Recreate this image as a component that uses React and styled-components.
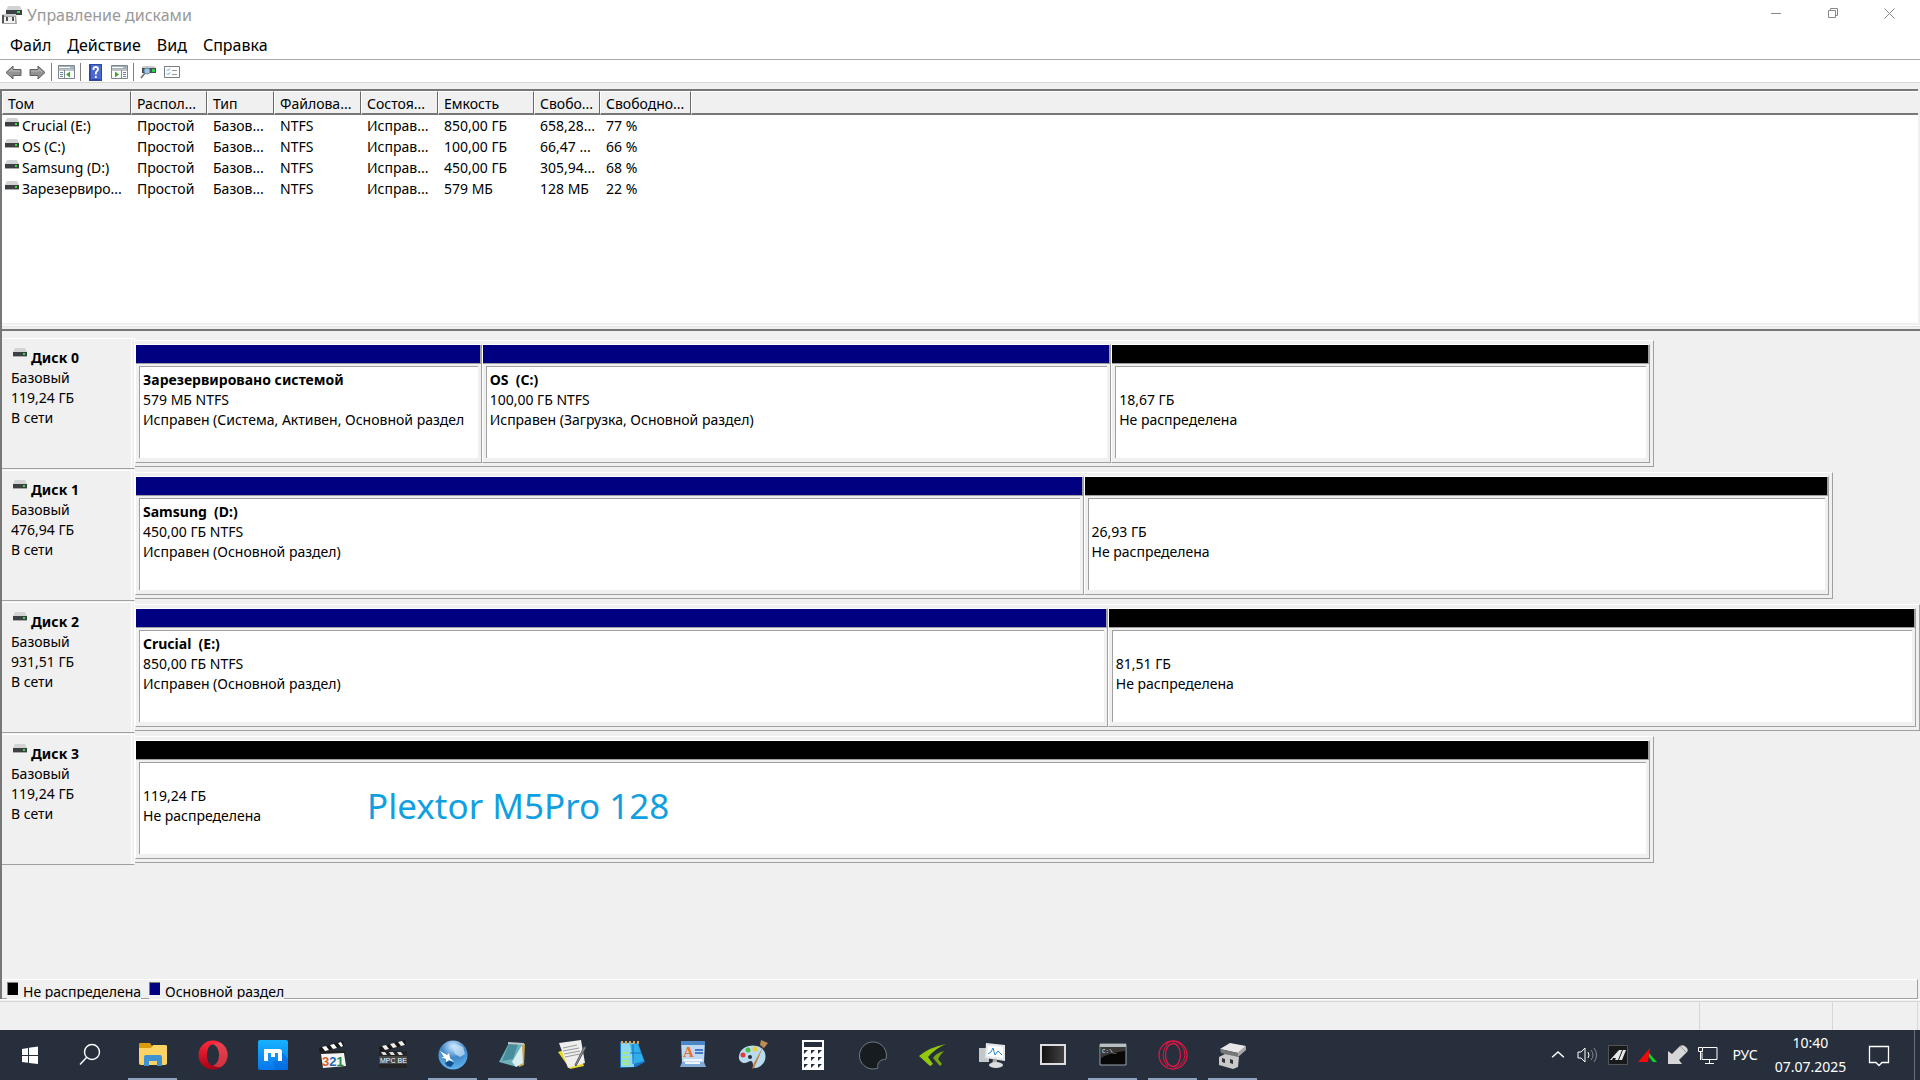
import React from "react";
import styled, { createGlobalStyle } from "styled-components";

const GlobalStyle = createGlobalStyle`
  *, *::before, *::after { box-sizing: border-box; }
  body { margin: 0; background: #f0f0f0; }
  button { font: inherit; color: inherit; background: none; border: 0; padding: 0; }
`;

const Screen = styled.div`
  display: flex;
  flex-direction: column;
  min-height: 100vh;
  background: #f0f0f0;
  color: #000;
  font: 14px/20px "Noto Sans", "Open Sans", sans-serif;
`;

const TitleBar = styled.header`
  display: flex;
  align-items: center;
  justify-content: space-between;
  height: 30px;
  padding: 0 2px;
  background: #fff;
  color: #999;
`;

const Title = styled.h1`
  display: flex;
  align-items: center;
  gap: 5px;
  margin: 0;
  font-size: 16px;
  font-weight: 400;
`;

const WindowButtons = styled.div`
  display: flex;
`;

const WindowButton = styled.button`
  display: grid;
  place-items: center;
  width: 57px;
  height: 30px;
  padding-bottom: 4px;
`;

const MenuBar = styled.nav`
  display: flex;
  gap: 16px;
  height: 30px;
  padding-left: 10px;
  align-items: center;
  background: #fff;
  border-bottom: 1px solid #a9a9a9;
  font-size: 16px;
`;

const ToolBar = styled.div`
  display: flex;
  align-items: center;
  height: 23px;
  padding: 2px 1px 0;
  background: #fff;
  border-bottom: 1px solid #d9d9d9;
`;

const ToolButton = styled.button`
  display: grid;
  place-items: center;
  width: 24px;
  height: 20px;
`;

const ToolSeparator = styled.span`
  width: 1px;
  height: 18px;
  margin: 0 2px;
  background: #808080;
`;

const Workspace = styled.main`
  display: flex;
  flex-direction: column;
  flex: 1;
  margin-top: 6px;
  border-left: 2px solid #777;
`;

const ListPane = styled.section`
  min-height: 234px;
  margin-right: 2px;
  background: #fff;
  border-top: 2px solid #777;
`;

const VolumeTable = styled.table`
  width: 100%;
  table-layout: fixed;
  border-collapse: separate;
  border-spacing: 0;
`;

const Column = styled.col`
  width: ${(p) => (p.$width ? `${p.$width}px` : "auto")};
`;

const HeadCell = styled.th`
  height: 24px;
  padding: 2px 0 0 5px;
  line-height: 19px;
  text-align: left;
  font-weight: 400;
  white-space: nowrap;
  overflow: hidden;
  background: #f0f0f0;
  border-top: 1px solid #fff;
  border-left: 1px solid #fff;
  border-right: ${(p) => (p.$last ? 0 : "1px solid #696969")};
  border-bottom: 2px solid #777;
`;

const Cell = styled.td`
  height: 21px;
  padding: 1px 0 0 6px;
  white-space: nowrap;
  overflow: hidden;
`;

const NameCell = styled.div`
  display: flex;
  gap: 3px;
  margin-left: -3px;
  svg { margin-top: 2px; }
`;

const Splitter = styled.div`
  height: 8px;
  border-top: 2px solid #f0f0f0;
  border-bottom: 2px solid #777;
  background: linear-gradient(#fff 0 1px, #e3e3e3 1px 2px, #f0f0f0 2px);
`;

const DiskPane = styled.section`
  flex: 1;
  padding-top: 7px;
`;

const DiskRow = styled.article`
  display: grid;
  grid-template-columns: 133px 1fr;
  padding-bottom: 1px;
`;

const DiskHeader = styled.header`
  padding: 9px 0 0 9px;
  border-top: 1px solid #fff;
  border-right: 1px solid #fff;
  border-bottom: 1px solid #a0a0a0;
  box-shadow: inset -2px 0 #f0f0f0, inset -3px 0 #fff;
`;

const DiskName = styled.h2`
  display: flex;
  gap: 4px;
  margin: 0;
  padding-left: 2px;
  font-size: 14px;
  font-weight: 700;
`;

const Line = styled.p`
  margin: 0;
  min-height: 20px;
  font-weight: ${(p) => (p.$bold ? 700 : 400)};
  white-space: pre;
`;

const DiskTrack = styled.div`
  display: flex;
  width: ${(p) => p.$share}%;
  margin: 2px 0;
  padding: 3px 3px 3px 0;
  border-top: 1px solid #fff;
  border-right: 1px solid #a0a0a0;
  border-bottom: 1px solid #a0a0a0;
`;

const Volume = styled.div`
  flex: ${(p) => p.$size} 0 0;
  min-width: 0;
  border-top: 1px solid #fff;
  border-left: 1px solid #fff;
  border-right: 1px solid #a0a0a0;
  border-bottom: 1px solid #a0a0a0;
`;

const Bar = styled.div`
  height: 19px;
  background: ${(p) => p.$color};
  border-right: 1px solid #a0a0a0;
  border-bottom: 1px solid #a0a0a0;
`;

const VolumeBody = styled.div`
  display: flex;
  gap: 106px;
  min-height: 92px;
  margin: 2px 3px 4px;
  padding: 3px 5px 0 3px;
  overflow: hidden;
  background: #fff;
  border-top: 1px solid #a0a0a0;
  border-left: 1px solid #a0a0a0;
`;

const VolumeText = styled.div`
  min-width: 0;
  overflow: hidden;
`;

const Note = styled.strong`
  padding-top: 16px;
  font-size: 35px;
  line-height: 48px;
  font-weight: 400;
  white-space: nowrap;
  color: #109fe0;
`;

const Legend = styled.footer`
  display: flex;
  align-items: flex-start;
  gap: 8px;
  height: 20px;
  margin-right: 2px;
  padding-left: 5px;
  border-top: 1px solid #fff;
  border-right: 1px solid #a0a0a0;
  border-bottom: 1px solid #a0a0a0;
`;

const LegendItem = styled.span`
  display: flex;
  gap: 5px;
  height: 20px;
  line-height: 24px;
  background: #f0f0f0;
`;

const Swatch = styled.i`
  width: 11px;
  height: 13px;
  margin-top: 2px;
  border: 1px solid #808080;
  border-width: 1px 0 0 1px;
  background: ${(p) => p.$color};
`;

const StatusBar = styled.div`
  display: flex;
  justify-content: flex-end;
  height: 31px;
  padding-top: 1px;
  border-top: 1px solid #fff;
  background: linear-gradient(#f0f0f0 0 1px, #d7d7d7 1px 2px, #f0f0f0 2px);
`;

const StatusCell = styled.span`
  width: ${(p) => p.$width}px;
  border-left: 1px solid #d7d7d7;
`;

const TaskBar = styled.footer`
  display: flex;
  justify-content: space-between;
  height: 50px;
  background: #272f3d;
  color: #fff;
`;

const TaskGroup = styled.div`
  display: flex;
`;

const TaskButton = styled.button`
  display: grid;
  place-items: center;
  width: 60px;
  height: 50px;
  padding-top: ${(p) => (p.$running ? 2 : 0)}px;
  border-bottom: ${(p) => (p.$running ? "2px solid #8fa3bf" : 0)};
`;

const TaskSlot = styled.div`
  width: 60px;
  padding: 0 6px 0 5px;
  & > button { width: 49px; }
`;

const SearchSlot = styled.div`
  width: 63px;
`;

const Tray = styled.div`
  display: flex;
  align-items: center;
  border-right: 5px solid #272f3d;
  box-shadow: inset -1px 0 #6a707b;
`;

const TrayButton = styled.button`
  display: grid;
  place-items: center;
  width: 30px;
  height: 50px;
`;

const Language = styled.button`
  width: 44px;
  height: 50px;
`;

const Clock = styled.time`
  width: 87px;
  text-align: center;
  line-height: 24px;
`;

const NotifyButton = styled(TrayButton)`
  width: 50px;
  margin-right: 11px;
`;

const HDD = () => (
  <svg width="14" height="9" viewBox="0 0 14 9" aria-hidden="true">
    <path d="M2 0h10l2 4H0z" fill="#d2d4d6" />
    <path d="M0 4h14v4H0z" fill="#3c4043" />
    <path d="M0 8h14v1H0z" fill="#aaa" />
    <path d="M10 5h2v2h-2z" fill="#35e035" />
  </svg>
);

const AppIcon = () => (
  <svg width="20" height="19" viewBox="0 0 20 19" aria-hidden="true">
    <path d="M6 0h12l2 4H4z" fill="#d0d2d3" />
    <path d="M4 4h16v5H4z" fill="#3d4144" />
    <path d="M15 5h3v2h-3z" fill="#2fe052" />
    <path d="M1 8h13l1 10H0z" fill="#a4a6a8" />
    <path d="M1 8h13v2H1z" fill="#c9cbcc" />
    <path d="M2 11h11v6H2z" fill="#f2f2f2" />
    <path d="M4 11h2v4H4zM10 11h2v4h-2zM0 9h2v8H0z" fill="#555" />
  </svg>
);

const Arrow = ({ flip }) => (
  <svg width="17" height="15" viewBox="0 0 17 15" aria-hidden="true">
    <path d={flip ? "M16 7.500L9 1v3.500H1v6h8V14z" : "M1 7.500L8 1v3.500h8v6H8V14z"} fill="#929292" stroke="#5f5f5f" strokeLinejoin="round" />
    <path d={flip ? "M2 6h8V4l3 3" : "M4 7l3-3v2h8"} fill="none" stroke="#bbb" />
  </svg>
);

const Panel = ({ right }) => (
  <svg width="17" height="14" viewBox="0 0 17 14" aria-hidden="true">
    <path d="M.5.5h16v13H.5z" fill="#fff" stroke="#7d8790" />
    <path d="M1 1h15v3H1z" fill="#a5b0bb" />
    <path d="M1 2.500h11M1 4.500h15" stroke="#fff" />
    <path d="M1 5h15" stroke="#7d8790" />
    {right ? (
      <>
        <path d="M10.500 5v9" stroke="#7d8790" />
        <path d="M4 6.500L8 9.500l-4 3z" fill="#3fa62f" />
        <path d="M12 7.500h3M12 9.500h3M12 11.500h3" stroke="#6d86a6" />
      </>
    ) : (
      <>
        <path d="M6.500 5v9" stroke="#7d8790" />
        <path d="M12 6.500L8 9.500l4 3z" fill="#3fa62f" />
        <path d="M2 7.500h3M2 9.500h3M2 11.500h3" stroke="#6d86a6" />
      </>
    )}
  </svg>
);

const HelpIcon = () => (
  <svg width="13" height="17" viewBox="0 0 13 17" aria-hidden="true">
    <path d="M0 0h13v17H0z" fill="#2d49a8" />
    <path d="M2 1h10v14H2z" fill="#4c69cf" />
    <path d="M4.500 6V4.500q0-1.500 2.200-1.500T9 5q0 1.500-1.200 2.300T6.800 10.500M6.800 12v2" fill="none" stroke="#fff" strokeWidth="1.800" />
  </svg>
);

const RescanIcon = () => (
  <svg width="16" height="14" viewBox="0 0 16 14" aria-hidden="true">
    <path d="M3 1h11l2 2H1z" fill="#ccc" />
    <path d="M2 3h14v5H2z" fill="#4a4e52" />
    <path d="M12 4h3v3h-3z" fill="#32cf45" />
    <circle cx="7" cy="6" r="3" fill="#9cc3e3" stroke="#5e87ab" />
    <path d="M5 8l-4 5" stroke="#7a7a7a" strokeWidth="2" />
  </svg>
);

const ListIcon = () => (
  <svg width="16" height="12" viewBox="0 0 16 12" aria-hidden="true">
    <path d="M.5.5h15v11H.5z" fill="#fff" stroke="#7c7c7c" />
    <path d="M3 3.500l1 1 2-2M3 7.500l1 1 2-2" stroke="#3b8fd0" fill="none" />
    <path d="M8 4.500h5M8 8.500h5" stroke="#999" />
  </svg>
);

const Icon = ({ children, size = 30 }) => (
  <svg width={size} height={size} viewBox="0 0 30 30" fill="none" aria-hidden="true">
    {children}
  </svg>
);

const icons = {
  start: (
    <Icon>
      <path d="M7 9l6-1v7H7zM14 7.800l9-1.300V15h-9zM7 16h6v6.800L7 22zM14 16h9v8l-9-1z" fill="#fff" />
    </Icon>
  ),
  search: (
    <Icon>
      <circle cx="17" cy="12" r="7.500" stroke="#fff" strokeWidth="1.400" />
      <path d="M11.500 17.500L5 24.500" stroke="#fff" strokeWidth="1.400" />
    </Icon>
  ),
  folder: (
    <Icon>
      <path d="M1 4q0-1 1-1h10l2 3h13q2 0 2 1v4H1z" fill="#d99a0c" />
      <path d="M1 8h12l2-3h12q2 0 2 1v17q0 2-2 2H3q-2 0-2-2z" fill="#fbd264" />
      <path d="M6 26V17q0-2 2-2h14q2 0 2 2v9h-5v-5h-8v5z" fill="#3f92d2" />
    </Icon>
  ),
  opera: (
    <Icon>
      <defs><linearGradient id="op" x1="0" y1="0" x2="0" y2="1"><stop stopColor="#ff2a3c" /><stop offset="1" stopColor="#a70014" /></linearGradient></defs>
      <path fillRule="evenodd" fill="url(#op)" d="M15 0.500a14.500 14.500 0 1 0 0 29a14.500 14.500 0 1 0 0-29zM15 4.500c4 0 6 5 6 10.500s-2 10.500-6 10.500-6-5-6-10.500 2-10.500 6-10.500z" />
      <path d="M15 4.500q5-3 9-1a14.500 14.500 0 0 1 0 23q-4 2-9-1c8-3 8-18 0-21z" fill="#e2525c" opacity=".6" />
    </Icon>
  ),
  maxthon: (
    <Icon>
      <defs><linearGradient id="mx" x1="0" y1="0" x2="0" y2="1"><stop stopColor="#16b2ff" /><stop offset="1" stopColor="#0876ec" /></linearGradient></defs>
      <rect width="30" height="30" rx="2" fill="url(#mx)" />
      <path d="M15 21l2 9h13V19l-6-7v9z" fill="#0569dc" opacity=".6" />
      <path d="M6 9h15q3 0 3 3v9h-4v-8h-3v4h-4v-4h-3v8H6z" fill="#fff" />
    </Icon>
  ),
  clapper: (
    <Icon>
      <path d="M1 8L25 1l1 5L2 13z" fill="#191919" />
      <path d="M4 7l3 4 4-1-3-4zM12 5l3 4 4-1-3-4zM20 3l3 4 2-1-2-4z" fill="#fff" />
      <path d="M2 11h25l1 16H4z" fill="#222" />
      <path d="M3 14l23-1 2 13-23 2z" fill="#f4f4f4" />
      <text x="4" y="26" fontFamily="Liberation Sans, sans-serif" fontWeight="700" fontSize="13"><tspan fill="#db5b20">3</tspan><tspan fill="#246bb5">2</tspan><tspan fill="#218a3b">1</tspan></text>
    </Icon>
  ),
  mpc: (
    <Icon>
      <path d="M1 7L27 0l1 5L2 12z" fill="#181818" />
      <path d="M4 6l3 4 4-1-3-4zM12 4l3 4 4-1-3-4zM20 2l3 4 4-1-3-4z" fill="#eee" />
      <path d="M1 11h28v17H1z" fill="#242424" />
      <path d="M3 12h4l2 3H5zM11 12h4l2 3h-4zM19 12h4l2 3h-4z" fill="#ddd" />
      <path d="M1 16h28v8H1z" fill="#464646" />
      <text x="2" y="23" fill="#fff" fontFamily="Liberation Sans, sans-serif" fontSize="7">MPC BE</text>
    </Icon>
  ),
  globe: (
    <Icon>
      <defs><radialGradient id="gl" cx=".5" cy=".2" r=".8"><stop stopColor="#cfe8ff" /><stop offset=".5" stopColor="#3f86c8" /><stop offset="1" stopColor="#5fb4f0" /></radialGradient></defs>
      <circle cx="15" cy="15" r="14.500" fill="url(#gl)" />
      <path d="M17 4l8 3 2 7-5 3-5-3-2-5z" fill="#cae7f9" opacity=".7" />
      <path d="M7 23q5-4 9 0l-3 4-4-1z" fill="#0f4f8c" />
      <path d="M2 11l7 4 2-2 1 5 4 4-5-2-3 2v-3l-5-2h3z" fill="#fff" />
    </Icon>
  ),
  notepad: (
    <Icon>
      <path d="M13 3l14 1-1 21-5 2z" fill="#c8a350" />
      <path d="M11 3l14 1-6 23-18-5z" fill="#6fb2bc" />
      <path d="M11 4h9l-5 15-11 2z" fill="#377f8e" opacity=".7" />
      <path d="M24 5l1 18-7 4-4-5z" fill="#d9eef0" />
      <path d="M10 2l16 1v2l-16-1z" fill="#bfc7c9" />
    </Icon>
  ),
  wordnote: (
    <Icon>
      <path d="M0 12l18-6 8 20-14 3z" fill="#e9d72c" />
      <path d="M1 3l22-3 4 23-17 5z" fill="#eee" />
      <path d="M5 8l14-3M5 11l16-3M6 14l16-3M7 17l15-3" stroke="#999" />
      <path d="M28 7L18 26l-1-1L26 7z" fill="#aaa" stroke="#555" />
    </Icon>
  ),
  bluenote: (
    <Icon>
      <path d="M2 2l18 1 7 19-9 5-16 1z" fill="#1c76c8" />
      <path d="M3 3h12l1 24H3z" fill="#8ad8f1" />
      <path d="M12 4h8l6 17-10 3z" fill="#32aee9" />
      <path d="M15 4v20M12 13h11" stroke="#1870bd" />
      <path d="M4 13h7M4 17h7M4 21h8M4 24h8" stroke="#a8e58c" strokeWidth="2" />
      <path d="M4 4V1M8 4V1M12 4V1M16 4V1M20 4V1" stroke="#d9a54f" strokeWidth="2" />
    </Icon>
  ),
  wordpad: (
    <Icon>
      <path d="M3 1h24l-1 21H4z" fill="#bdd8f5" />
      <path d="M3 1h24v4H3z" fill="#4b86c5" />
      <path d="M4 22h22l2 5H2z" fill="#81abd9" />
      <text x="5" y="17" fill="#ed711f" fontFamily="Liberation Serif, serif" fontWeight="700" fontSize="15">A</text>
      <path d="M17 10h8M17 13h8" stroke="#4479c3" strokeWidth="2" />
      <path d="M6 20h18M7 23h15" stroke="#eef6ff" strokeWidth="2" />
    </Icon>
  ),
  paint: (
    <Icon>
      <path d="M1 16C2 8 11 4 19 6c11 3 11 16 2 21-4 2-6 1-6-2 0-4-2-5-5-3-5 3-10-1-9-6z" fill="#b8dbef" />
      <circle cx="5" cy="15" r="2.500" fill="#df3c3c" />
      <circle cx="10" cy="10" r="2.500" fill="#4dbe43" />
      <circle cx="17" cy="9" r="2.500" fill="#f1cd37" />
      <circle cx="12" cy="17" r="2" fill="#272f3d" />
      <path d="M26 5L16 28l-2 1 2-6z" fill="#c87b2b" />
      <path d="M23 0l7 3-4 5-4-3z" fill="#be8d55" />
    </Icon>
  ),
  calc: (
    <Icon>
      <path d="M4 0h22v30H4z" fill="#fff" />
      <path d="M6 2h18v5H6zM6 10h4l-4 4zM13 10h4l-4 4zM20 10h4l-4 4zM6 17h4l-4 4zM13 17h4l-4 4zM20 17h4l-4 4zM6 24h4l-4 4zM13 24h4l-4 4zM20 24h4l-4 4z" fill="#272f3d" />
    </Icon>
  ),
  disc: (
    <Icon>
      <path d="M20 28A13.500 13.500 0 1 1 28 19c-2 1-3 0-4 1-3 1-5 4-4 8z" fill="#171c21" stroke="#747b85" />
    </Icon>
  ),
  nvidia: (
    <Icon>
      <path d="M28 4Q12 7 1 16l11 10 3-2-5-7Q18 8 28 4z" fill="#94c80e" />
      <path d="M26 11q-8 2-11 7l7 8 2-2-4-5q2-4 6-8z" fill="#7aa80d" />
    </Icon>
  ),
  monitor: (
    <Icon>
      <path d="M1 8h10v14H1z" fill="#c4c7c9" />
      <path d="M8 3l19 2v16L7 18z" fill="#e5e8ea" />
      <path d="M10 6l15 1v11l-16-2z" fill="#fff" />
      <path d="M10 14l3-2 2-4 2 7 3-4 4 4" stroke="#2389d2" />
      <path d="M15 19l4 1v4l-5 1z" fill="#aaa" />
      <ellipse cx="18" cy="25" rx="7" ry="3" fill="#ddd" />
    </Icon>
  ),
  screen: (
    <Icon>
      <defs><linearGradient id="sc"><stop stopColor="#111" /><stop offset="1" stopColor="#444" /></linearGradient></defs>
      <path d="M3 5h24v19H3z" fill="url(#sc)" stroke="#ddd" strokeWidth="2" />
    </Icon>
  ),
  cmd: (
    <Icon>
      <path d="M2 4h26v21H2z" fill="#070707" stroke="#9ca4a9" />
      <path d="M2 4h26v3H2z" fill="#b9c0c4" />
      <path d="M3 7h24v4Q10 13 3 18z" fill="#383838" />
      <text x="4" y="13" fill="#eee" fontFamily="Liberation Mono, monospace" fontSize="6">C:\_</text>
    </Icon>
  ),
  operagx: (
    <Icon>
      <circle cx="15" cy="15" r="14" stroke="#df1645" strokeWidth="1.300" />
      <ellipse cx="15" cy="15" rx="7.500" ry="11.500" stroke="#df1645" strokeWidth="1.300" />
      <path d="M8 3Q20-2 26 9q4 13-9 19M10 3Q0 15 10 27" stroke="#df1645" strokeWidth="1" />
    </Icon>
  ),
  disks: (
    <Icon>
      <path d="M2 9L12 3l16 3-8 7z" fill="#e7e7e7" />
      <path d="M2 9l18 4v4L3 13z" fill="#777" />
      <path d="M20 13l8-7v4l-8 7z" fill="#aaa" />
      <path d="M1 17l6-3 14 3-1 10-5 2-14-4z" fill="#c9c9c9" />
      <path d="M4 18l3 1v4l-3-1zM12 19l3 1v4l-3-1z" fill="#333" />
    </Icon>
  ),
  up: <Icon size={22}><path d="M7 18l8-7 8 7" stroke="#fff" strokeWidth="2" /></Icon>,
  volume: (
    <Icon>
      <path d="M5 12v6h3l4 4V8l-4 4zM15 12q2 3 0 6" stroke="#fff" />
      <path d="M18 10q4 5 0 10M21 8q5 7 0 14" stroke="#858b95" />
    </Icon>
  ),
  ai: (
    <Icon>
      <path d="M5.500 5.500h19v19h-19z" fill="#17191a" stroke="#555" />
      <path d="M7 20l9-10h3l-4 10h-3l1-2h-3l-1 2zM20 10h3l-4 10h-3z" fill="#e7e7e7" />
    </Icon>
  ),
  fan: (
    <Icon>
      <path d="M5 22L17 8l-2 14z" fill="#f00b0b" />
      <path d="M16 13l8 9h-4l-4-5z" fill="#0cd527" />
    </Icon>
  ),
  pointer: (
    <Icon>
      <path d="M5 11l4 3 8-8q3-2 6 1t1 5l-8 8 3 4H5z" fill="#d6d6d6" />
      <path d="M17 6l6 6" stroke="#999" />
    </Icon>
  ),
  network: (
    <Icon>
      <path d="M10 7.500h14v12H9v-7M16.500 20v3M12 23.500h9M5.500 7.500h4v4h-4zM7.500 12v8" stroke="#fff" />
    </Icon>
  ),
  notify: (
    <Icon>
      <path d="M5.500 6.500h19v16H18l-3 3-3-3H5.500z" stroke="#fff" strokeWidth="1.300" />
    </Icon>
  ),
};

const columns = [
  ["Том", 129], ["Распол...", 76], ["Тип", 67], ["Файлова...", 87], ["Состоя...", 77],
  ["Емкость", 96], ["Свобо...", 66], ["Свободно...", 91], ["", 0],
];

const volumes = [
  ["Crucial (E:)", "850,00 ГБ", "658,28...", "77 %"],
  ["OS (C:)", "100,00 ГБ", "66,47 ...", "66 %"],
  ["Samsung (D:)", "450,00 ГБ", "305,94...", "68 %"],
  ["Зарезервиро...", "579 МБ", "128 МБ", "22 %"],
];

const NAVY = "#000080";
const BLACK = "#000";

const disks = [
  { name: "Диск 0", size: "119,24 ГБ", share: 85.1, parts: [
    { w: 346, color: NAVY, lines: ["Зарезервировано системой", "579 МБ NTFS", "Исправен (Система, Активен, Основной раздел"] },
    { w: 630, color: NAVY, lines: ["OS  (C:)", "100,00 ГБ NTFS", "Исправен (Загрузка, Основной раздел)"] },
    { w: 539, color: BLACK, lines: ["", "18,67 ГБ", "Не распределена"] },
  ] },
  { name: "Диск 1", size: "476,94 ГБ", share: 95.1, parts: [
    { w: 949, color: NAVY, lines: ["Samsung  (D:)", "450,00 ГБ NTFS", "Исправен (Основной раздел)"] },
    { w: 745, color: BLACK, lines: ["", "26,93 ГБ", "Не распределена"] },
  ] },
  { name: "Диск 2", size: "931,51 ГБ", share: 100, parts: [
    { w: 973, color: NAVY, lines: ["Crucial  (E:)", "850,00 ГБ NTFS", "Исправен (Основной раздел)"] },
    { w: 808, color: BLACK, lines: ["", "81,51 ГБ", "Не распределена"] },
  ] },
  { name: "Диск 3", size: "119,24 ГБ", share: 85.1, parts: [
    { w: 1, color: BLACK, lines: ["", "119,24 ГБ", "Не распределена"], note: "Plextor M5Pro 128" },
  ] },
];

const apps = [
  ["Проводник", "folder", true], ["Opera", "opera"], ["Maxthon", "maxthon"], ["Media Player Classic", "clapper"],
  ["MPC-BE", "mpc"], ["Браузер", "globe", true], ["Блокнот", "notepad", true], ["Заметки", "wordnote"],
  ["Notepad", "bluenote"], ["WordPad", "wordpad"], ["Paint", "paint"], ["Калькулятор", "calc"],
  ["Диск", "disc"], ["Nvidia", "nvidia"], ["Монитор", "monitor"], ["Экран", "screen"],
  ["Командная строка", "cmd", true], ["Opera GX", "operagx", true], ["Управление дисками", "disks", true],
];

const tray = [
  ["Скрытые значки", "up"], ["Громкость", "volume"], ["AI Suite", "ai"], ["Датчики", "fan"],
  ["Устройства", "pointer"], ["Сеть", "network"],
];

export default function App() {
  return (
    <Screen>
      <GlobalStyle />
      <TitleBar>
        <Title><AppIcon />Управление дисками</Title>
        <WindowButtons>
          <WindowButton aria-label="Свернуть"><svg width="10" height="10"><path d="M0 5.500h10" stroke="#888" /></svg></WindowButton>
          <WindowButton aria-label="Восстановить"><svg width="10" height="10" fill="none"><path d="M.5 2.500h7v7h-7zM2.500 2V.5h7v7H8" stroke="#888" /></svg></WindowButton>
          <WindowButton aria-label="Закрыть"><svg width="11" height="11"><path d="M.5.5l10 10M10.500.5l-10 10" stroke="#888" /></svg></WindowButton>
        </WindowButtons>
      </TitleBar>
      <MenuBar>
        {["Файл", "Действие", "Вид", "Справка"].map((m) => <button key={m}>{m}</button>)}
      </MenuBar>
      <ToolBar>
        <ToolButton aria-label="Назад"><Arrow /></ToolButton>
        <ToolButton aria-label="Вперед"><Arrow flip /></ToolButton>
        <ToolSeparator />
        <ToolButton aria-label="Дерево"><Panel /></ToolButton>
        <ToolSeparator />
        <ToolButton aria-label="Справка"><HelpIcon /></ToolButton>
        <ToolButton aria-label="Действия"><Panel right /></ToolButton>
        <ToolSeparator />
        <ToolButton aria-label="Повторить проверку"><RescanIcon /></ToolButton>
        <ToolButton aria-label="Параметры"><ListIcon /></ToolButton>
      </ToolBar>
      <Workspace>
        <ListPane>
          <VolumeTable>
            <colgroup>{columns.map(([n, w]) => <Column key={n} $width={w} />)}</colgroup>
            <thead>
              <tr>{columns.map(([n, w]) => <HeadCell key={n} $last={!w}>{n}</HeadCell>)}</tr>
            </thead>
            <tbody>
              {volumes.map(([name, size, free, pct]) => (
                <tr key={name}>
                  <Cell><NameCell><HDD />{name}</NameCell></Cell>
                  <Cell>Простой</Cell>
                  <Cell>Базов...</Cell>
                  <Cell>NTFS</Cell>
                  <Cell>Исправ...</Cell>
                  <Cell>{size}</Cell>
                  <Cell>{free}</Cell>
                  <Cell>{pct}</Cell>
                  <Cell />
                </tr>
              ))}
            </tbody>
          </VolumeTable>
        </ListPane>
        <Splitter />
        <DiskPane>
          {disks.map((d) => (
            <DiskRow key={d.name}>
              <DiskHeader>
                <DiskName><HDD />{d.name}</DiskName>
                <Line>Базовый</Line>
                <Line>{d.size}</Line>
                <Line>В сети</Line>
              </DiskHeader>
              <DiskTrack $share={d.share}>
                {d.parts.map((p, i) => (
                  <Volume key={i} $size={p.w}>
                    <Bar $color={p.color} />
                    <VolumeBody>
                      <VolumeText>
                        {p.lines.map((t, j) => <Line key={j} $bold={j === 0}>{t}</Line>)}
                      </VolumeText>
                      {p.note && <Note>{p.note}</Note>}
                    </VolumeBody>
                  </Volume>
                ))}
              </DiskTrack>
            </DiskRow>
          ))}
        </DiskPane>
        <Legend>
          <LegendItem><Swatch $color={BLACK} />Не распределена</LegendItem>
          <LegendItem><Swatch $color={NAVY} />Основной раздел</LegendItem>
        </Legend>
      </Workspace>
      <StatusBar>
        <StatusCell $width={133} />
        <StatusCell $width={85} />
        <StatusCell $width={3} />
      </StatusBar>
      <TaskBar>
        <TaskGroup>
          <TaskButton aria-label="Пуск">{icons.start}</TaskButton>
          <SearchSlot><TaskButton aria-label="Поиск">{icons.search}</TaskButton></SearchSlot>
          {apps.map(([name, icon, running]) => (
            <TaskSlot key={name}><TaskButton aria-label={name} $running={running}>{icons[icon]}</TaskButton></TaskSlot>
          ))}
        </TaskGroup>
        <Tray>
          {tray.map(([name, icon]) => <TrayButton key={name} aria-label={name}>{icons[icon]}</TrayButton>)}
          <Language>РУС</Language>
          <Clock>10:40<br />07.07.2025</Clock>
          <NotifyButton aria-label="Уведомления">{icons.notify}</NotifyButton>
        </Tray>
      </TaskBar>
    </Screen>
  );
}
